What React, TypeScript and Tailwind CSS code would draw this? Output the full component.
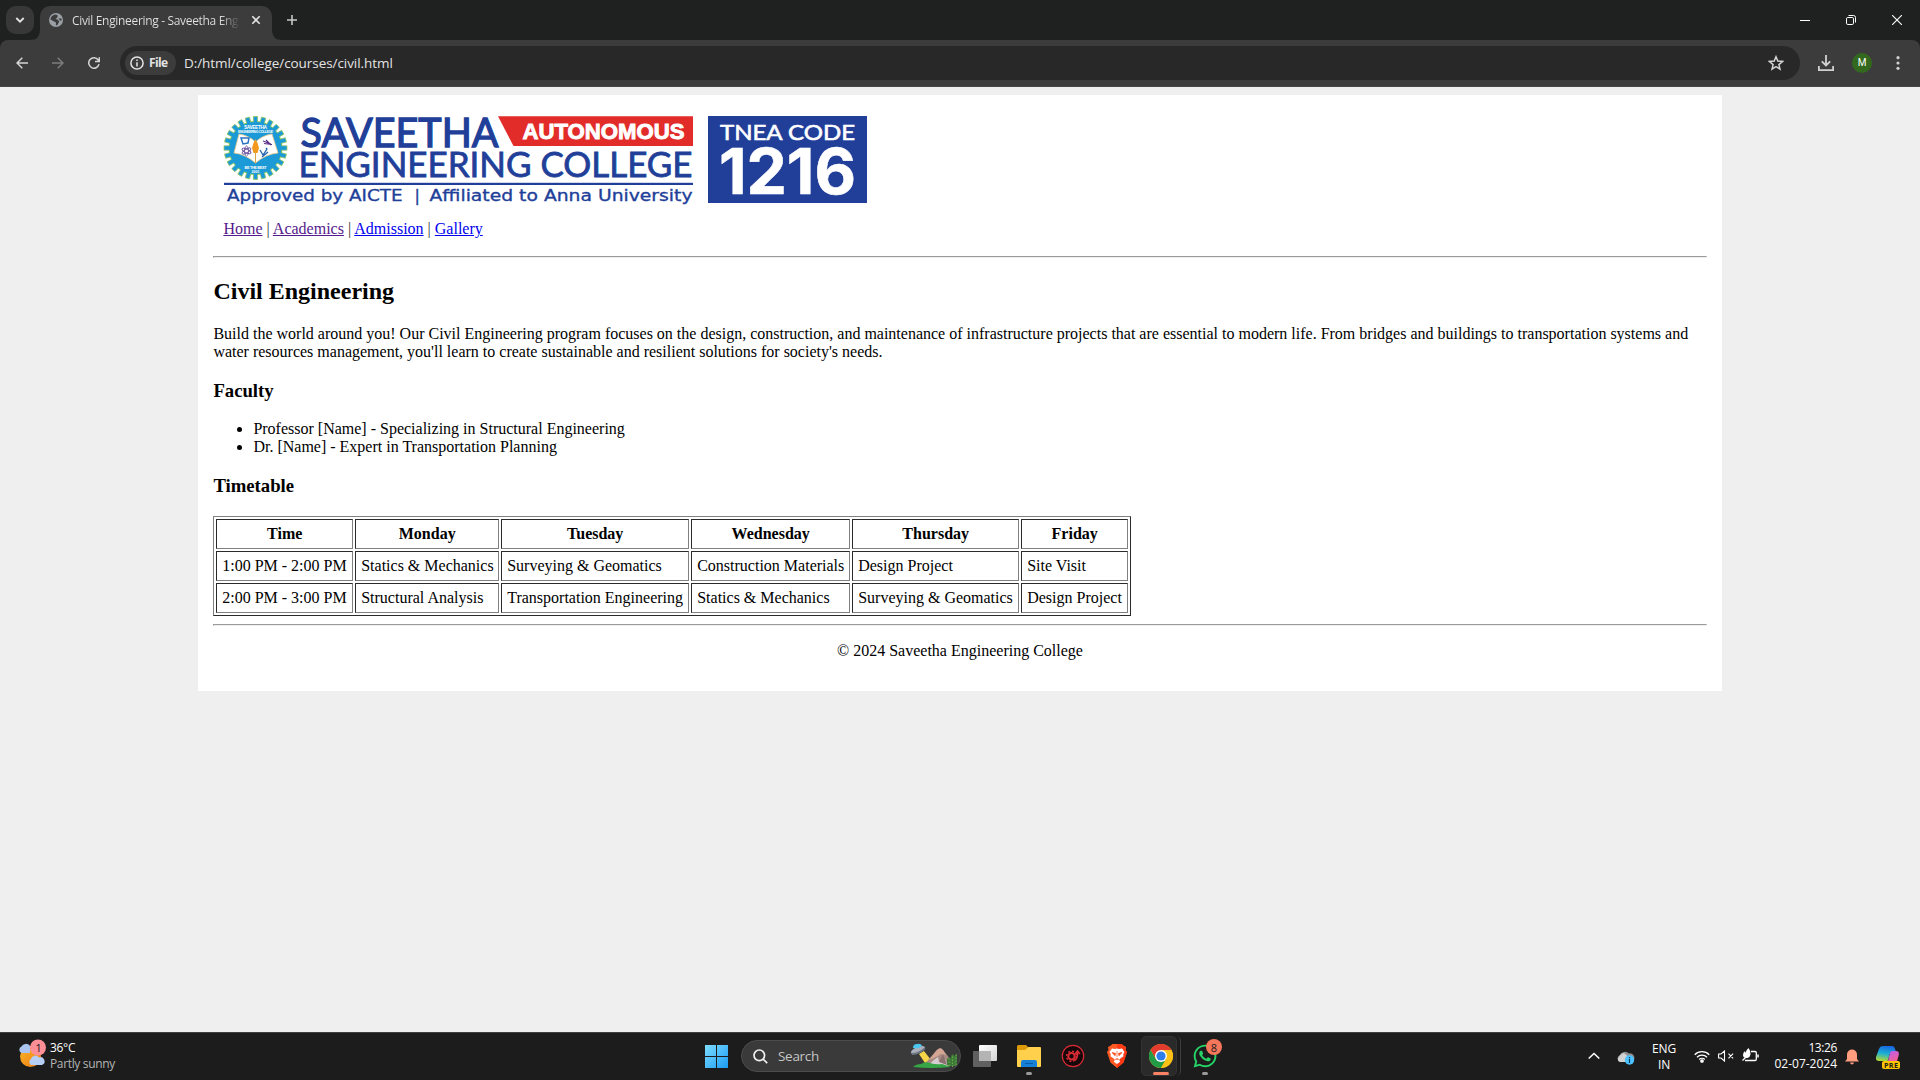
import React from "react";
import { FaWhatsapp } from "react-icons/fa";

const UI = "font-['Open_Sans','Noto_Sans',sans-serif]";

function Emblem() {
  const cx = 255.5;
  const cy = 148;
  return (
    <g>
      <circle cx={cx} cy={cy} r="26.5" fill="#1c9ad7" stroke="#8cc63f" strokeWidth="1" />
      {Array.from({ length: 24 }, (_, i) => (
        <rect
          key={i}
          x={cx - 2.2}
          y={cy - 31.5}
          width="4.4"
          height="7"
          fill="#1c9ad7"
          stroke="#9ccb5a"
          strokeWidth="0.7"
          transform={`rotate(${i * 15} ${cx} ${cy})`}
        />
      ))}
      <circle cx={cx} cy={cy} r="26" fill="#1c9ad7" />
      <path d="M239 134Q249 135.500 255.500 142Q262 135.500 272 134L278 153Q266 154 255.500 163Q245 154 234 153Z" fill="#fff" stroke="#e8c98a" strokeWidth="0.8" />
      <path d="M255.500 139l2 4 1.500 5-1.500 5h-4l-1.500-5 1.500-5z" fill="#f39a1e" />
      <path d="M255.500 151v12" stroke="#d9a441" strokeWidth="1" />
      <path d="M241 138h8l-1 5-5 1z" fill="none" stroke="#2a74c4" strokeWidth="1.500" />
      <path d="M263 141l8 3M264 143.500l8 1M266 140l5 5" stroke="#5a2d84" strokeWidth="1.100" />
      <g fill="none" stroke="#5b3f95" strokeWidth="0.8">
        <ellipse cx="246.500" cy="151" rx="5" ry="1.900" transform="rotate(25 246.500 151)" />
        <ellipse cx="246.500" cy="151" rx="5" ry="1.900" transform="rotate(90 246.500 151)" />
        <ellipse cx="246.500" cy="151" rx="5" ry="1.900" transform="rotate(150 246.500 151)" />
      </g>
      <path d="M260 150l3 5 4-6-1-1M262 157l6-5" fill="none" stroke="#2364ad" strokeWidth="1.300" />
      <g fill="#fff" fontFamily="Liberation Sans" fontWeight="700" textAnchor="middle">
        <text x={cx} y="128.800" fontSize="4.800" textLength="23">SAVEETHA</text>
        <text x={cx} y="133" fontSize="3.400" textLength="35">ENGINEERING COLLEGE</text>
        <text x={cx} y="169" fontSize="3.800" textLength="22">BE THE BEST</text>
        <text x={cx} y="173" fontSize="3.600" textLength="8">2001</text>
      </g>
    </g>
  );
}

function CollegeLogo() {
  return (
    <svg className="block h-[92px] w-[646px] overflow-visible" viewBox="223 115 646 92">
      <Emblem />
      <g fill="#213f99" stroke="#213f99">
        <text x="300.500" y="146.700" fontFamily="Lato" fontWeight="400" fontSize="41" strokeWidth="1.300" textLength="198" lengthAdjust="spacingAndGlyphs">SAVEETHA</text>
        <text x="298.500" y="177" fontFamily="Lato" fontWeight="400" fontSize="34.500" strokeWidth="0.800" textLength="394" lengthAdjust="spacingAndGlyphs">ENGINEERING COLLEGE</text>
        <rect x="224" y="182.800" width="469" height="2.200" stroke="none" />
        <g fontFamily="DejaVu Sans" fontSize="16" strokeWidth="0.350">
          <text x="227" y="201" textLength="175.500" lengthAdjust="spacingAndGlyphs">Approved by AICTE</text>
          <text x="414.500" y="201">|</text>
          <text x="429.500" y="201" textLength="263" lengthAdjust="spacingAndGlyphs">Affiliated to Anna University</text>
        </g>
      </g>
      <path d="M498 116.300H693V146H513.500Z" fill="#e22c2a" />
      <text x="522.500" y="138.800" fill="#fff" stroke="#fff" strokeWidth="0.900" fontFamily="Liberation Sans" fontWeight="700" fontSize="21.500" textLength="162" lengthAdjust="spacingAndGlyphs">AUTONOMOUS</text>
      <rect x="708" y="116" width="159" height="87" fill="#213f99" />
      <text x="720" y="140" fill="#fff" stroke="#fff" strokeWidth="0.600" fontFamily="Lato" fontWeight="400" fontSize="21.500" textLength="135" lengthAdjust="spacingAndGlyphs">TNEA CODE</text>
      <text x="719" y="193.700" fill="#fff" stroke="#fff" strokeWidth="0.600" fontFamily="Inter" fontWeight="700" fontSize="63" textLength="137" lengthAdjust="spacingAndGlyphs">1216</text>
    </svg>
  );
}

function TabStrip() {
  return (
    <div className="flex h-10 bg-[#1f2120] pl-1.5 pt-1.5">
      <div className="flex h-7 w-7 items-center justify-center rounded-[10px] bg-[#383838]">
        <svg width="10" height="10" viewBox="0 0 10 10" fill="none" stroke="#e3e3e3" strokeWidth="1.800"><path d="M1.300 3l3.700 3.700L8.700 3" /></svg>
      </div>
      <svg className="mt-auto -ml-1 h-2.5 w-2.5" viewBox="0 0 10 10"><path d="M10 0v10H0Q10 10 10 0z" fill="#3c3c3c" /></svg>
      <div className="flex w-[232px] items-center rounded-t-[10px] bg-[#3c3c3c] pb-[6px] pl-[9px]">
        <svg className="shrink-0" width="14" height="14" viewBox="0 0 14 14">
          <circle cx="7" cy="7" r="7" fill="#9aa0a6" />
          <path d="M6 1.500L8.500 2v2.200L6.500 6l2.500.8 1.200 2L8 12.500 6.800 12l.2-2.500-2-1-3.500-2C1.500 4 3.500 2 6 1.500zM9.500 5.500h3l.2 1.700-1.500.5z" fill="#3c3c3c" />
        </svg>
        <span className={`ml-[9px] w-[168px] pt-px overflow-hidden whitespace-nowrap bg-gradient-to-r from-[#e3e3e3] from-88% to-transparent bg-clip-text text-[12px] leading-4 tracking-[-0.33px] text-transparent ${UI}`}>
          Civil Engineering - Saveetha Eng
        </span>
        <svg className="ml-[11px]" width="10" height="10" viewBox="0 0 10 10" stroke="#e3e3e3" strokeWidth="1.600"><path d="M1.300 1.300l7.400 7.400M8.700 1.300L1.300 8.700" /></svg>
      </div>
      <svg className="mt-auto h-2.5 w-2.5" viewBox="0 0 10 10"><path d="M0 0v10h10Q0 10 0 0z" fill="#3c3c3c" /></svg>
      <svg className="ml-[5px] mt-[9px]" width="10" height="10" viewBox="0 0 10 10" stroke="#c7c7c7" strokeWidth="1.600"><path d="M5 0v10M0 5h10" /></svg>
      <div className="ml-auto mr-[18px] flex h-7 items-center gap-9">
        <svg width="10" height="10" viewBox="0 0 10 10" stroke="#fff"><path d="M0 5.500h10" /></svg>
        <svg width="10" height="10" viewBox="0 0 10 10" fill="none" stroke="#fff"><rect x=".5" y="2.500" width="7" height="7" rx="1.300" /><path d="M2.500.500h5a2 2 0 0 1 2 2v5" /></svg>
        <svg width="10" height="10" viewBox="0 0 10 10" stroke="#fff" strokeWidth="1.100"><path d="M0 0l10 10M10 0L0 10" /></svg>
      </div>
    </div>
  );
}

function Toolbar() {
  return (
    <div className="bg-[#1f2120]">
      <div className="flex h-[47px] items-center rounded-t-[8px] border-b border-[#464646] bg-[#3c3c3c] pl-4">
        <svg width="12" height="12" viewBox="0 0 12 12" fill="none" stroke="#d5d5d5" strokeWidth="1.500"><path d="M6.300.700L1 6l5.300 5.300M1 6h11" /></svg>
        <svg className="ml-6" width="12" height="12" viewBox="0 0 12 12" fill="none" stroke="#7d7d7d" strokeWidth="1.500"><path d="M5.700.700L11 6l-5.300 5.300M11 6H0" /></svg>
        <svg className="ml-6" width="12" height="12" viewBox="0 0 12 12" fill="none" stroke="#d5d5d5" strokeWidth="1.500"><path d="M11 7.200A5.200 5.200 0 1 1 10.200 3L11 4.200M11.300.200v4.300H7" /></svg>
        <div className="ml-5 flex h-[34px] w-[1680px] items-center rounded-full bg-[#282828] pl-[5px]">
          <div className="flex h-6 w-[51px] items-center rounded-full bg-[#3c3c3c] pl-[5px]">
            <svg width="14" height="14" viewBox="0 0 14 14" fill="none" stroke="#e3e3e3" strokeWidth="1.500"><circle cx="7" cy="7" r="6.100" /><path d="M7 6.200v4.200M7 3.600v1.500" /></svg>
            <span className={`ml-[5px] text-[12px] font-bold leading-4 tracking-[-0.6px] text-[#e3e3e3] ${UI}`}>File</span>
          </div>
          <span className={`ml-2 whitespace-nowrap text-[13.500px] leading-5 tracking-[-0.06px] text-[#e3e3e3] ${UI}`}>D:/html/college/courses/civil.html</span>
          <svg className="ml-auto mr-4" width="16" height="16" viewBox="0 0 16 16" fill="none" stroke="#d5d5d5" strokeWidth="1.500"><path d="M8 1.800l1.800 4.300 4.700.4-3.600 3.100 1.100 4.600L8 11.700l-4 2.500 1.100-4.600L1.500 6.500l4.700-.4z" /></svg>
        </div>
        <svg className="ml-[18px]" width="16" height="16" viewBox="0 0 16 16" fill="none" stroke="#d0d0d0" strokeWidth="1.800"><path d="M8 0v10.300M3.800 6.300L8 10.500l4.200-4.200M.900 11v4.100h14.200V11" /></svg>
        <div className="ml-[18px] flex h-5 w-5 items-center justify-center rounded-full bg-[#33691e] font-[Roboto,sans-serif] text-[10px] leading-none text-white">M</div>
        <svg className="ml-6" width="4" height="14" viewBox="0 0 4 14" fill="#d0d0d0"><circle cx="2" cy="1.700" r="1.600" /><circle cx="2" cy="7" r="1.600" /><circle cx="2" cy="12.300" r="1.600" /></svg>
      </div>
    </div>
  );
}

const head: [string, string][] = [
  ["Time", "w-[137px]"],
  ["Monday", "w-[144px]"],
  ["Tuesday", "w-[188px]"],
  ["Wednesday", "w-[159px]"],
  ["Thursday", "w-[167px]"],
  ["Friday", "w-[107px]"],
];
const rows = [
  ["1:00 PM - 2:00 PM", "Statics & Mechanics", "Surveying & Geomatics", "Construction Materials", "Design Project", "Site Visit"],
  ["2:00 PM - 3:00 PM", "Structural Analysis", "Transportation Engineering", "Statics & Mechanics", "Surveying & Geomatics", "Design Project"],
];
const cell = "h-[30px] whitespace-nowrap border border-t-[#2b2b2b] border-l-[#2b2b2b] border-r-[#808080] border-b-[#808080] py-[5px] pl-[5.2px] pr-[4.8px]";

function Rule() {
  return <div className="h-0.5 border border-t-[#9a9a9a] border-l-[#9a9a9a] border-b-[#eeeeee] border-r-[#eeeeee]" />;
}

function Page() {
  return (
    <main className="h-[945px] bg-[#efefef] pt-2 font-['Liberation_Serif',serif] text-[16px] leading-[18px] text-black">
      <div className="mx-auto h-[596px] w-[1524px] bg-white px-[15px] pt-5">
        <header className="h-[141px] pl-2.5">
          <CollegeLogo />
          <nav className="mt-[13px] pl-[0.4px] text-[#333]">
            <a className="text-[#551a8b] underline">Home</a> | <a className="text-[#551a8b] underline">Academics</a> | <a className="text-[#0000ee] underline">Admission</a> | <a className="text-[#0000ee] underline">Gallery</a>
          </nav>
        </header>
        <Rule />
        <h2 className="mt-5 pl-[0.4px] text-[24px] font-bold leading-[27px]">Civil Engineering</h2>
        <p className="mt-5 pl-[0.4px]">
          Build the world around you! Our Civil Engineering program focuses on the design, construction, and maintenance of infrastructure projects that are essential to modern life. From bridges and buildings to transportation systems and water resources management, you'll learn to create sustainable and resilient solutions for society's needs.
        </p>
        <h3 className="mt-[19px] pl-[0.4px] text-[18.72px] font-bold leading-[21px]">Faculty</h3>
        <ul className="mt-[19px] list-disc pl-[40.4px]">
          <li>Professor [Name] - Specializing in Structural Engineering</li>
          <li>Dr. [Name] - Expert in Transportation Planning</li>
        </ul>
        <h3 className="mt-[19px] pl-[0.4px] text-[18.72px] font-bold leading-[21px]">Timetable</h3>
        <table className="mt-5 w-[918px] table-fixed border-separate border-spacing-[2px] border border-t-[#808080] border-l-[#808080] border-r-[#2b2b2b] border-b-[#2b2b2b]">
          <thead>
            <tr>{head.map(([t, w]) => <th key={t} className={`${cell} ${w} text-center font-bold`}>{t}</th>)}</tr>
          </thead>
          <tbody>
            {rows.map((r) => <tr key={r[0]}>{r.map((c, i) => <td key={i} className={cell}>{c}</td>)}</tr>)}
          </tbody>
        </table>
        <div className="mt-2"><Rule /></div>
        <p className="mt-4 text-center">© 2024 Saveetha Engineering College</p>
      </div>
    </main>
  );
}

function SearchArt() {
  return (
    <svg width="48" height="26" viewBox="0 0 48 26">
      <path d="M9 11l5-3 7 9-6 3z" fill="#f6d548" />
      <path d="M13 23L26 8q4-5 7-1l13 16z" fill="#a88a82" />
      <path d="M26 8q4-5 7-1l3 5-5-1-5 3-7 3z" fill="#d3a592" />
      <path d="M17 23l7-6 4-3 1 5 6-3 3 7z" fill="#d5cdd2" />
      <path d="M29 19l4-8 4 11z" fill="#8a706e" />
      <path d="M37 22v-6l2-2 1 2 2-5 3 2 2-3v12q-5 2-10 0z" fill="#3c7a38" />
      <path d="M39 23v-8M42.500 24V12M46 22V10" stroke="#6aac48" strokeWidth="1" strokeDasharray="1.500 1.500" />
      <path d="M3 24q3-3 8-3 4-3 9-1 6 2 12 1l9 3q-20 2-38 0z" fill="#35a545" />
      <ellipse cx="8" cy="7" rx="7.500" ry="3" transform="rotate(-22 8 7)" fill="#a9b0bc" />
      <path d="M3 5q0-4 4-4 4-1 5 2-3 3-9 2z" fill="#4cc6ef" />
      <path d="M1 10q8 0 14-6 1 2-2 4-5 4-11 4z" fill="#6d7482" />
    </svg>
  );
}

function Taskbar() {
  return (
    <div className={`flex h-12 items-center border-t border-[#3f3f3f] bg-[#1c1c1c] pb-px ${UI} text-[12px] leading-4 text-white`}>
      <div className="flex w-[705px] items-center pl-[18px]">
        <svg className="mb-1" width="28" height="30" viewBox="0 0 28 30">
          <defs><linearGradient id="sun" x1="0" y1="0" x2="1" y2="1"><stop stopColor="#f9b52c" /><stop offset="1" stopColor="#ee7d10" /></linearGradient></defs>
          <circle cx="12.500" cy="17.500" r="10.500" fill="url(#sun)" />
          <path d="M3.500 14a3.500 3.500 0 0 1 0-6.500A5 5 0 0 1 12 7v7z" fill="#a9c4f0" />
          <path d="M13 26a3.500 3.500 0 0 1 0-6 4.500 4.500 0 0 1 8-1.500 4 4 0 0 1 3 7.500z" fill="#b7cef5" />
          <circle cx="20" cy="8.500" r="8" fill="#ff8f97" />
          <text x="20.500" y="12.500" textAnchor="middle" fontSize="11.500" fill="#1c1c1c">1</text>
        </svg>
        <div className="ml-1">
          <div className="tracking-[-0.3px]">36°C</div>
          <div className="tracking-[-0.35px] text-[#b5b5b5]">Partly sunny</div>
        </div>
      </div>
      <svg width="23" height="23" viewBox="0 0 23 23">
        <defs><linearGradient id="win" x1="0" y1="0" x2="1" y2="1"><stop stopColor="#7edcff" /><stop offset="1" stopColor="#1a9cf5" /></linearGradient></defs>
        <path d="M0 0h11v11H0zM12 0h11v11H12zM0 12h11v11H0zM12 12h11v11H12z" fill="url(#win)" />
      </svg>
      <div className="ml-[13px] flex h-8 w-[220px] items-center rounded-full border border-[#4b4b4b] bg-[#3a3a3a] pl-[11px] pr-[2px]">
        <svg width="15" height="15" viewBox="0 0 15 15" fill="none" stroke="#f0f0f0" strokeWidth="1.700"><circle cx="6.300" cy="6.300" r="5.300" /><path d="M10 10l4.200 4.200" /></svg>
        <span className="ml-2.5 text-[13.500px] tracking-[-0.3px] text-[#c5c5c5]">Search</span>
        <div className="ml-auto"><SearchArt /></div>
      </div>
      <svg className="ml-3" width="24" height="22" viewBox="0 0 24 22">
        <defs><linearGradient id="tv" x1="0" y1="0" x2="1" y2="1"><stop stopColor="#fff" /><stop offset="1" stopColor="#d5d5d5" /></linearGradient></defs>
        <rect x="6" width="18" height="16" rx="1" fill="url(#tv)" /><rect y="6" width="18" height="16" rx="1" fill="#606060" /><path d="M6 6h12v10H6z" fill="#b4b4b4" />
      </svg>
      <div className="relative ml-5 h-[22px] w-6">
        <svg width="24" height="22" viewBox="0 0 24 22">
          <path d="M0 1.500Q0 0 1.500 0H9l2 2-3 4H0z" fill="#dd9a05" /><path d="M0 5h8l3-3h12q1 0 1 1v18q0 1-1 1H1q-1 0-1-1z" fill="#ffd04c" />
          <path d="M4 22v-5q0-2 2-2h12q2 0 2 2v5z" fill="#1680d8" /><path d="M8 18h8v1H8z" fill="#0b5aa6" />
        </svg>
        <span className="absolute -bottom-[8px] left-[9px] h-[3px] w-1.5 rounded-full bg-[#9a9a9a]" />
      </div>
      <svg className="ml-[20px]" width="24" height="24" viewBox="0 0 24 24" fill="none" stroke="#d92b34">
        <circle cx="12" cy="12" r="10.700" fill="#150809" strokeWidth="1.200" />
        <circle cx="10.500" cy="12.300" r="3.200" strokeWidth="2" /><circle cx="10.500" cy="12.300" r="5" strokeWidth="1.500" strokeDasharray="2 1.930" />
        <path d="M13.500 16.500q3.500-2.500 3-8.500M14 10l2.500-3L19 10" strokeWidth="1.600" />
      </svg>
      <div className="ml-[20px] flex h-6 w-6 items-center justify-center">
        <svg width="20" height="24" viewBox="0 0 20 24">
          <path d="M5.500 0h9L17 2l2 1-.5 3L20 8l-3.500 10.500L10 24l-6.500-5.500L0 8l1.500-2L1 3l2-1z" fill="#ff5a24" />
          <path d="M10 0h4.500L17 2l2 1-.5 3L20 8l-3.500 10.500L10 24z" fill="#ff3a14" />
          <path d="M5 4.500l3 .6 2-.5 2 .5 3-.6L17.500 8l-1.300 2.300.3 2-3.500 2.500-.8 1.200 1 1.700L10 20l-3.200-2.300 1-1.700-.8-1.200-3.500-2.500.3-2L2.500 8z" fill="#fff" />
          <path d="M5 8.500l3.500.8-.5 2.500zM15 8.500l-3.500.8.5 2.500zM10 7v6M8 15.500l2-1 2 1" fill="#ff4a1c" stroke="#ff4a1c" strokeWidth=".7" />
        </svg>
      </div>
      <div className="relative ml-3 h-10 w-10">
        <span className="absolute inset-y-0 right-0 w-3 rounded-[5px] border-r border-[#3d3d3d]" />
        <div className="flex h-10 w-9 items-center justify-center rounded-[5px] border border-[#333] bg-[#2a2a2a] pl-1">
          <svg className="shrink-0" width="24" height="24" viewBox="0 0 24 24">
            <circle cx="12" cy="12" r="12" fill="#fbc116" />
            <path d="M12 12L6.800 15 1.600 6A12 12 0 0 1 22.400 6H12z" fill="#e33b2e" />
            <path d="M1.600 6a12 12 0 0 0 10.400 18l5.200-9L12 12 6.800 15z" fill="#229a46" />
            <path d="M17.200 15L12 24A12 12 0 0 0 22.400 6H12z" fill="#fbc116" />
            <circle cx="12" cy="12" r="6" fill="#fff" /><circle cx="12" cy="12" r="4.600" fill="#2f7de9" />
          </svg>
        </div>
        <span className="absolute bottom-[1px] left-3 h-[3px] w-4 rounded-full bg-[#f78164]" />
      </div>
      <div className="relative ml-3 h-6 w-6">
        <FaWhatsapp className="h-[26px] w-[26px] -ml-px -mt-px text-[#25d366]" />
        <span className="absolute -top-[5px] left-[13px] flex h-4 w-4 items-center justify-center rounded-full bg-[#f4775c] text-[11px] leading-none text-[#1c1c1c]">8</span>
        <span className="absolute -bottom-[7px] left-[9px] h-[3px] w-1.5 rounded-full bg-[#9a9a9a]" />
      </div>
      <div className="ml-auto flex items-center pr-5">
        <svg width="12" height="8" viewBox="0 0 12 8" fill="none" stroke="#fff" strokeWidth="1.500"><path d="M.700 6.500L6 1.500l5.300 5" /></svg>
        <svg className="ml-[17px] mt-1" width="18" height="14" viewBox="0 0 18 14">
          <path d="M3.500 11a3.500 3.500 0 0 1-.5-6.800A5.500 5.500 0 0 1 12 2.500 4 4 0 0 1 14 11z" fill="#8f8f8f" /><path d="M7 2l-6 5 2-3Q5 2 7 2l7 6-6 3H3.500Q1 11 .8 7.500z" fill="#d2d2d2" />
          <circle cx="12.500" cy="9" r="4.700" fill="#4cc2ff" /><path d="M12.500 8v4M12.500 6v1.200" stroke="#0e3a57" strokeWidth="1.200" />
        </svg>
        <div className="ml-[13px] w-8 pt-0.5 text-center tracking-[-0.2px]"><div>ENG</div><div>IN</div></div>
        <svg className="ml-[14px]" width="16" height="13" viewBox="0 0 16 13" fill="none" stroke="#fff" strokeWidth="1.300">
          <path d="M.700 4.700a10.300 10.300 0 0 1 14.600 0M3 7.200a7 7 0 0 1 10 0M5.200 9.500a4 4 0 0 1 5.600 0" /><circle cx="8" cy="11" r="1.200" fill="#fff" />
        </svg>
        <svg className="ml-2" width="16" height="12" viewBox="0 0 16 12" fill="none" stroke="#fff" strokeWidth="1.100"><path d="M.600 4v4H3l3.500 3V1L3 4zM10.500 3.700l4.600 4.600M15.100 3.700l-4.600 4.600" /></svg>
        <svg className="ml-2 mb-0.5" width="17" height="14" viewBox="0 0 17 14" fill="none" stroke="#fff" strokeWidth="1.300">
          <path d="M9 3.500h4q1.300 0 1.300 1.300v6.400q0 1.300-1.300 1.300H3" /><path d="M16 6.500v3" strokeWidth="1.500" /><path d="M6.500 0Q9 3 8.500 6.500 8 9.500 5.500 10 1 10.500 1 7q0-2.500 2-4l.5 2Q4 2 6.500 0z" fill="#fff" stroke="none" /><path d="M.5 12.500L4.500 8.500" />
        </svg>
        <div className="w-[78px] whitespace-nowrap text-right"><div className="tracking-[-0.4px]">13:26</div><div className="tracking-[-0.01px]">02-07-2024</div></div>
        <svg className="ml-2 mt-0.5" width="14" height="16" viewBox="0 0 14 16" fill="#ff9d7e"><path d="M2 10V5.500a5 5 0 0 1 10 0V10l2 2.500H0zM5 13.500h4q-.5 2-2 2t-2-2z" /></svg>
        <svg className="ml-[17px] mt-0.5" width="24" height="24" viewBox="0 0 24 24">
          <defs><linearGradient id="cp1" x1="0.500" y1="0" x2="0.300" y2="1"><stop stopColor="#1668e0" /><stop offset=".5" stopColor="#1cb0d4" /><stop offset="1" stopColor="#b5d930" /></linearGradient><linearGradient id="cp2" x1="0" y1="0" x2="0.500" y2="1"><stop stopColor="#b65ff0" /><stop offset="1" stopColor="#f0609a" /></linearGradient></defs>
          <path d="M7 1h9q2 0 2.700 2l1 3h-3q-2 0-3 3l-2 7H3q-4 0-3-4l3-8q1-3 4-3z" fill="url(#cp1)" />
          <path d="M15.500 6H20q4 0 2.500 5L21 16h-9l2-8q.5-2 1.500-2z" fill="url(#cp2)" />
          <rect x="6" y="16" width="18" height="8" rx="2" fill="#fdc500" />
          <text x="15" y="22.600" textAnchor="middle" fontFamily="Open Sans" fontWeight="700" fontSize="7.200" textLength="14" fill="#1c1c1c">PRE</text>
        </svg>
      </div>
    </div>
  );
}

export default function App() {
  return (
    <div className="flex h-[1080px] w-[1920px] flex-col overflow-hidden">
      <TabStrip />
      <Toolbar />
      <Page />
      <Taskbar />
    </div>
  );
}
